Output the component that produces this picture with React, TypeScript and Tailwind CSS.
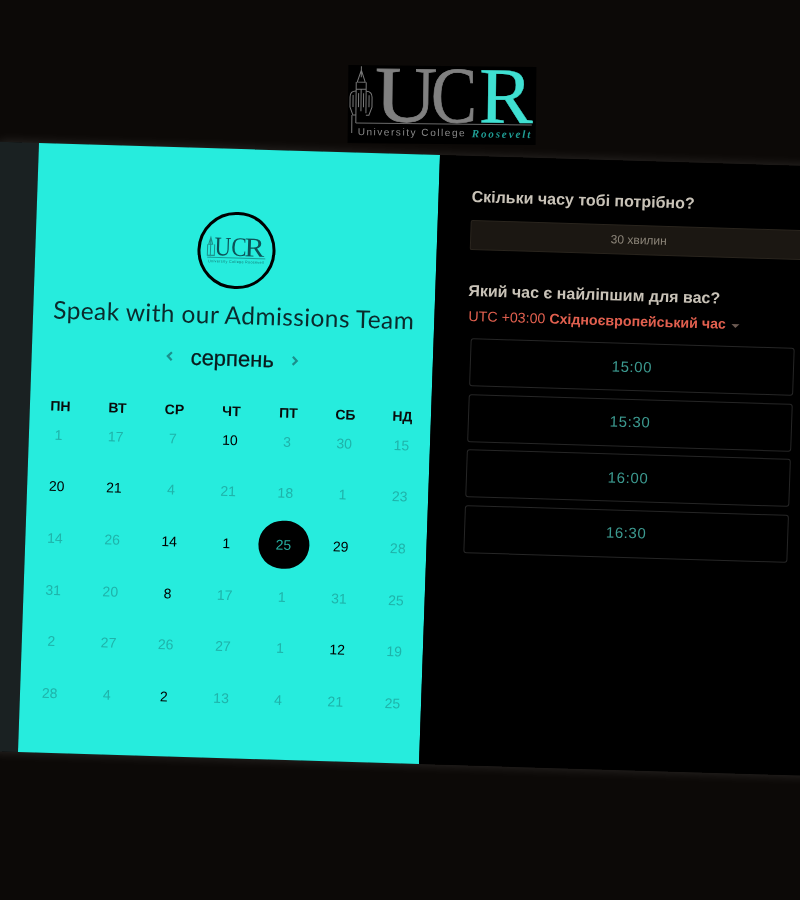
const sans = "font-['Liberation_Sans',Arial,sans-serif]";

const weekdays = ["пн", "вт", "ср", "чт", "пт", "сб", "нд"];

// active = bookable day, shown in black
const days: { n: number; active?: boolean; selected?: boolean }[][] = [
  [{ n: 1 }, { n: 17 }, { n: 7 }, { n: 10, active: true }, { n: 3 }, { n: 30 }, { n: 15 }],
  [{ n: 20, active: true }, { n: 21, active: true }, { n: 4 }, { n: 21 }, { n: 18 }, { n: 1 }, { n: 23 }],
  [{ n: 14 }, { n: 26 }, { n: 14, active: true }, { n: 1, active: true }, { n: 25, selected: true }, { n: 29, active: true }, { n: 28 }],
  [{ n: 31 }, { n: 20 }, { n: 8, active: true }, { n: 17 }, { n: 1 }, { n: 31 }, { n: 25 }],
  [{ n: 2 }, { n: 27 }, { n: 26 }, { n: 27 }, { n: 1 }, { n: 12, active: true }, { n: 19 }],
  [{ n: 28 }, { n: 4 }, { n: 2, active: true }, { n: 13 }, { n: 4 }, { n: 21 }, { n: 25 }],
];

const times = ["15:00", "15:30", "16:00", "16:30"];

function TopLogo() {
  return (
    <svg width="188" height="78" viewBox="0 0 188 78" className="rotate-[0.6deg] overflow-visible">
      <rect x="0" y="0" width="188" height="78" fill="#000" />
      {/* tower */}
      <g fill="none" stroke="#7a7a7a" strokeWidth="1">
        <path d="M13 1V12M13 5L9 17H17L13 5" />
        <path d="M8 17V48M18 17V48M8 24H18M13 24V46" />
        <path d="M8 26C4 26 2 28 2 32V42L5 50H8M18 26C22 26 24 28 24 32V42L21 50H18" />
        <path d="M5 30V42M21 30V42M10.5 28V42M15.5 28V42" />
        <path d="M4 50V68M8 48V58" />
      </g>
      <text x="27" y="56" fontFamily="Liberation Serif" fontSize="80" fill="#808080" stroke="#808080" strokeWidth="0.7" textLength="62" lengthAdjust="spacingAndGlyphs">U</text>
      <text x="83" y="56" fontFamily="Liberation Serif" fontSize="80" fill="#808080" stroke="#808080" strokeWidth="0.7" textLength="46" lengthAdjust="spacingAndGlyphs">C</text>
      <text x="131" y="56" fontFamily="Liberation Serif" fontSize="80" fill="#3fe0d2" stroke="#3fe0d2" strokeWidth="0.4" textLength="54" lengthAdjust="spacingAndGlyphs">R</text>
      <path d="M8 58H184" stroke="#6a6a6a" strokeWidth="1" />
      <text x="10" y="70" fontFamily="Liberation Sans" fontSize="10" fill="#8a8a8a" letterSpacing="1.1" textLength="108">University College</text>
      <text x="124" y="71" fontFamily="Liberation Serif" fontSize="11" fontWeight="700" fontStyle="italic" fill="#1f9d94" letterSpacing="1.4" textLength="60">Roosevelt</text>
    </svg>
  );
}

function CircleLogo() {
  return (
    <div className="w-[78px] h-[77px] rounded-full border-[3px] border-black flex items-center justify-center">
      <svg width="62" height="32" viewBox="0 0 62 32" className="overflow-visible">
        <g fill="none" stroke="#1c8f8a" strokeWidth="1">
          <path d="M5 3V22M2 10V21H9V10M5 3L3 10H7Z" />
        </g>
        <text x="9" y="21" fontFamily="Liberation Serif" fontSize="27" fill="#0d5157" textLength="32" lengthAdjust="spacingAndGlyphs">UC</text>
        <text x="39" y="21" fontFamily="Liberation Serif" fontSize="27" fill="#0d5157" textLength="20" lengthAdjust="spacingAndGlyphs">R</text>
        <path d="M2 23H60" stroke="#0d5157" strokeWidth="0.5" />
        <text x="3" y="28" fontFamily="Liberation Sans" fontSize="3.6" fill="#137471" textLength="56">University College Roosevelt</text>
      </svg>
    </div>
  );
}

function CalendarPanel() {
  return (
    <div className={`w-[401px] h-[609px] shrink-0 bg-[#26ecdd] flex flex-col items-center pt-[63px] ${sans}`}>
      <CircleLogo />
      <h1 className="mt-[8px] font-['Lato',sans-serif] text-[24.5px] leading-[36px] tracking-[0.4px] text-[#0b2a2c] whitespace-nowrap">
        Speak with our Admissions Team
      </h1>
      <div className="mt-[11px] flex items-center">
        <svg width="10" height="14" viewBox="0 0 10 14" className="mr-[16px] -mt-[3px]">
          <path d="M7 3L3 7L7 11" fill="none" stroke="#1b8f8c" strokeWidth="2.2" />
        </svg>
        <span className="text-[22px] leading-[30px] text-[#0a1a1c] [-webkit-text-stroke:0.3px_#0a1a1c]">серпень</span>
        <svg width="10" height="14" viewBox="0 0 10 14" className="ml-[16px] -mt-[1px]">
          <path d="M3 3L7 7L3 11" fill="none" stroke="#1b8f8c" strokeWidth="2.2" />
        </svg>
      </div>

      <div className="mt-[29.5px] w-[401px] pl-[2px] grid grid-cols-7">
        {weekdays.map((d) => (
          <div key={d} className="h-[15px] flex items-center justify-center text-[14px] font-bold uppercase text-[#0a0a0a]">
            {d}
          </div>
        ))}
      </div>
      <div className="mt-[1.5px] w-[401px] pl-[1px] grid grid-cols-7 gap-y-[11.7px]">
        {days.flat().map((d, i) => (
          <div key={i} className="h-[40px] flex items-center justify-center">
            {d.selected ? (
              <span className="w-[51px] h-[48px] shrink-0 rounded-full bg-black flex items-center justify-center text-[14px] text-[#25ad9f]">
                {d.n}
              </span>
            ) : (
              <span className={d.active ? "text-[14px] text-black" : "text-[14px] text-[#1fb3aa]"}>{d.n}</span>
            )}
          </div>
        ))}
      </div>
    </div>
  );
}

function TimePanel() {
  return (
    <div className={`w-[420px] h-[609px] shrink-0 bg-black pl-[33px] pt-[31px] ${sans}`}>
      <h2 className="text-[16px] leading-[20px] font-bold text-[#c9c3b8]">Скільки часу тобі потрібно?</h2>
      <div className="mt-[13px] w-[337px] h-[30px] rounded-[2px] bg-[#1b1712] border border-[#2a251e] flex items-center justify-center text-[12px] text-[#8b8478]">
        30 хвилин
      </div>
      <h2 className="mt-[31px] text-[16px] leading-[20px] font-bold text-[#c9c3b8]">Який час є найліпшим для вас?</h2>
      <div className="mt-[5px] ml-[1px] flex items-center text-[14.2px] leading-[20px] text-[#e2604f]">
        <span>UTC +03:00</span>
        <span className="ml-[4px] font-bold">Східноєвропейський час</span>
        <span className="ml-[6px] mt-[3px] w-0 h-0 border-x-[4px] border-x-transparent border-t-[4px] border-t-[#6b5a52]" />
      </div>
      <div className="mt-[12px] ml-[4px] w-[324px] flex flex-col gap-[7.5px]">
        {times.map((t) => (
          <div key={t} className="h-[48px] rounded-[3px] border border-[#262626] flex items-center justify-center text-[15px] tracking-[0.6px] text-[#3c9a90]">
            {t}
          </div>
        ))}
      </div>
    </div>
  );
}

export default function App() {
  return (
    <div className="w-[800px] h-[900px] overflow-hidden bg-[#0c0907] blur-[0.35px]">
      <div className="h-[143px] pt-[66px] pl-[348px]">
        <TopLogo />
      </div>
      <div className="flex w-[861px] ml-[-1px] origin-[40px_0] [transform:matrix(1,0.03,-0.0345,1,0,0)] shadow-[0_0_12px_rgba(255,255,255,0.14)]">
        <div className="w-[40px] shrink-0 bg-[#1a2122]" />
        <CalendarPanel />
        <TimePanel />
      </div>
    </div>
  );
}
